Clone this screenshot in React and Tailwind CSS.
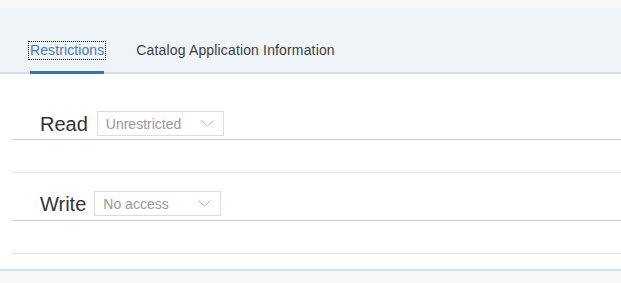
import React from 'react';

const Chevron = () => (
  <svg width="13" height="7" viewBox="0 0 13 7" fill="none" className="shrink-0">
    <path d="M0.5 0.5 L6.5 6 L12.5 0.5" stroke="#9db6cf" strokeWidth="1" />
  </svg>
);

const Select = ({ value }) => (
  <div className="flex h-[25px] w-[127px] items-center justify-between border border-[#dcdcdc] bg-white pl-[8px] pr-[9px]">
    <span className="text-[14px] leading-none text-[#999999]">{value}</span>
    <Chevron />
  </div>
);

const Row = ({ label, value, gap }) => (
  <div className="flex items-center pl-[28px]">
    <span className="text-[20px] leading-none text-[#333333]">{label}</span>
    <div className={gap}>
      <Select value={value} />
    </div>
  </div>
);

export default function App() {
  return (
    <div className="h-[283px] w-full overflow-hidden bg-[#f7f7f7] pt-[8px] font-['Liberation_Sans',Arial,sans-serif]">
      {/* Tab bar */}
      <div className="flex h-[66px] items-end gap-[32px] border-b-2 border-[#d1e0ee] bg-[#eff4f9] pl-[30px]">
        <div className="-mb-[2px] flex flex-col">
          <span className="-mx-px px-px text-[14px] leading-[17px] tracking-[0.1px] text-[#4a7bab] outline-1 outline-dotted outline-black">
            Restrictions
          </span>
          <span className="mt-[12px] h-[3px] bg-[#3d74a6]" />
        </div>
        <div className="flex flex-col">
          <span className="text-[14px] leading-[17px] tracking-[0.15px] text-[#404040]">Catalog Application Information</span>
          <span className="mt-[12px] h-[1px]" />
        </div>
      </div>

      {/* Content */}
      <div className="border-b-2 border-[#d1e0ee] bg-white pl-[12px]">
        <div className="border-b border-[#cccccc] pb-[3px] pt-[37px]">
          <Row label="Read" value="Unrestricted" gap="ml-[9px]" />
        </div>
        <div className="h-[33px] border-b border-[#e5e5e5]" />
        <div className="border-b border-[#cccccc] pb-[4px] pt-[18px]">
          <Row label="Write" value="No access" gap="ml-[8px]" />
        </div>
        <div className="h-[33px] border-b border-[#e5e5e5]" />
        <div className="h-[15px]" />
      </div>
    </div>
  );
}
